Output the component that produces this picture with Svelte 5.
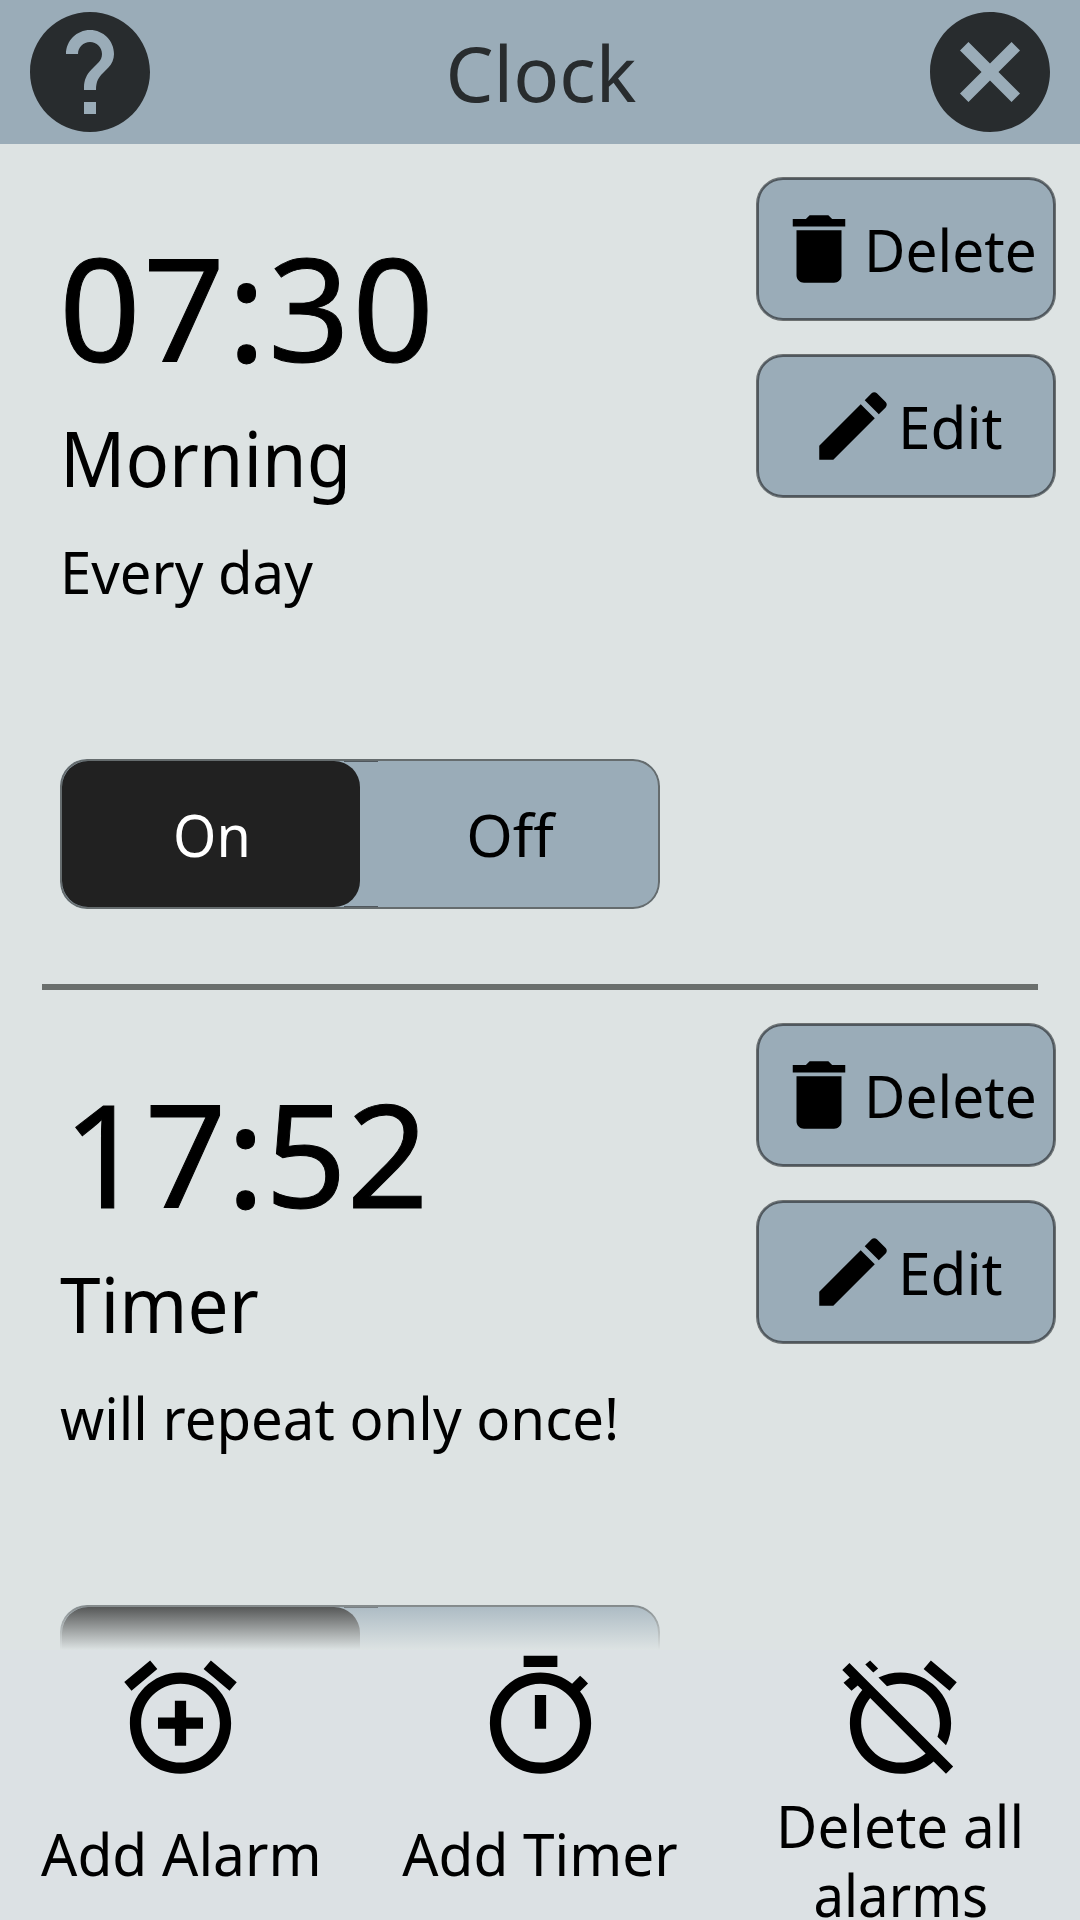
<script>
  // `fit` is the horizontal condensation applied to a piece of text
  const alarms = [
    {
      time: { text: '07:30', kind: 'wide' },
      title: { text: 'Morning', fit: 0.943 },
      repeat: { text: 'Every day', fit: 0.961 }
    },
    {
      time: { text: '17:52', kind: 'narrow' },
      title: { text: 'Timer', fit: 0.953 },
      repeat: { text: 'will repeat only once!', fit: 0.963 }
    }
  ];
</script>

{#snippet label(text, fit)}
  <span class="label" style:--fit={fit}>{text}</span>
{/snippet}

<div class="screen">
  <header>
    <button class="round" aria-label="Help">
      <svg viewBox="0 0 24 24"><path d="M12 2C6.48 2 2 6.48 2 12s4.48 10 10 10 10-4.48 10-10S17.52 2 12 2zm1 17h-2v-2h2v2zm2.07-7.75l-.9.92C13.45 12.9 13 13.5 13 15h-2v-.5c0-1.1.45-2.1 1.17-2.83l1.24-1.26c.37-.36.59-.86.59-1.41 0-1.1-.9-2-2-2s-2 .9-2 2H8c0-2.21 1.79-4 4-4s4 1.79 4 4c0 .88-.36 1.68-.93 2.25z" /></svg>
    </button>
    <h1>{@render label('Clock', 0.995)}</h1>
    <button class="round" aria-label="Close">
      <svg viewBox="0 0 24 24"><path d="M12 2C6.47 2 2 6.47 2 12s4.47 10 10 10 10-4.47 10-10S17.53 2 12 2zm5 13.59L15.59 17 12 13.41 8.41 17 7 15.59 10.59 12 7 8.41 8.41 7 12 10.59 15.59 7 17 8.41 13.41 12 17 15.59z" /></svg>
    </button>
  </header>

  <main>
    {#each alarms as alarm}
      <section class="alarm">
        <div class="info">
          <div class="time {alarm.time.kind}">{alarm.time.text}</div>
          <div class="title">{@render label(alarm.title.text, alarm.title.fit)}</div>
          <div class="repeat">{@render label(alarm.repeat.text, alarm.repeat.fit)}</div>
          <div class="toggle">
            <button class="on">{@render label('On', 0.95)}</button>
            <button class="off">{@render label('Off', 1.02)}</button>
          </div>
        </div>
        <div class="actions">
          <button class="action delete">
            <svg viewBox="0 0 24 24"><path d="M6 19c0 1.1.9 2 2 2h8c1.1 0 2-.9 2-2V7H6v12zM19 4h-3.5l-1-1h-5l-1 1H5v2h14V4z" /></svg>
            {@render label('Delete', 0.971)}
          </button>
          <button class="action edit">
            <svg viewBox="0 0 24 24"><path d="M3 17.25V21h3.75L17.81 9.94l-3.75-3.75L3 17.25zM20.71 7.04c.39-.39.39-1.02 0-1.41l-2.34-2.34c-.39-.39-1.02-.39-1.41 0l-1.83 1.83 3.75 3.75 1.83-1.83z" /></svg>
            {@render label('Edit', 1)}
          </button>
        </div>
      </section>
    {/each}
    <div class="fade"></div>
  </main>

  <footer>
    <button class="tool add">
      <svg viewBox="0 0 24 24"><path d="M7.88 3.39L6.6 1.86 2 5.71l1.29 1.53 4.59-3.85zM22 5.72l-4.6-3.86-1.29 1.53 4.6 3.86L22 5.72zM12 4c-4.97 0-9 4.03-9 9s4.02 9 9 9c4.97 0 9-4.03 9-9s-4.03-9-9-9zm0 16c-3.87 0-7-3.13-7-7s3.13-7 7-7 7 3.13 7 7-3.13 7-7 7zm1-11h-2v3H8v2h3v3h2v-3h3v-2h-3V9z" /></svg>
      <div class="caption">{@render label('Add Alarm', 0.972)}</div>
    </button>
    <button class="tool">
      <svg viewBox="0 0 24 24"><path d="M15 1H9v2h6V1zm-4 13h2V8h-2v6zm8.03-6.61l1.42-1.42c-.43-.51-.9-.99-1.41-1.41l-1.42 1.42C16.07 4.74 14.12 4 12 4c-4.97 0-9 4.03-9 9s4.02 9 9 9 9-4.03 9-9c0-2.12-.74-4.07-1.97-5.61zM12 20c-3.87 0-7-3.13-7-7s3.13-7 7-7 7 3.13 7 7-3.13 7-7 7z" /></svg>
      <div class="caption">{@render label('Add Timer', 0.97)}</div>
    </button>
    <button class="tool">
      <svg viewBox="0 0 24 24"><path d="M12 6c3.87 0 7 3.13 7 7 0 .84-.16 1.65-.43 2.4l1.52 1.52c.58-1.19.91-2.51.91-3.92 0-4.97-4.03-9-9-9-1.41 0-2.73.33-3.92.91L9.6 6.43C10.35 6.16 11.16 6 12 6zm10-.28l-4.6-3.86-1.29 1.53 4.6 3.86L22 5.72zM2.92 2.29L1.65 3.57 2.98 4.9l-1.11.93 1.42 1.42 1.11-.94.8.8C3.83 8.69 3 10.75 3 13c0 4.97 4.02 9 9 9 2.25 0 4.31-.83 5.89-2.2l2.2 2.2 1.27-1.27L3.89 3.27l-.97-.98zm13.55 16.1C15.26 19.39 13.7 20 12 20c-3.87 0-7-3.13-7-7 0-1.7.61-3.26 1.61-4.47l9.86 9.86zM8.02 3.28L6.6 1.86l-.86.71 1.42 1.42.86-.71z" /></svg>
      <div class="caption double">
        {@render label('Delete all', 0.968)}
        {@render label('alarms', 0.931)}
      </div>
    </button>
  </footer>
</div>

<style>
  :global(body) {
    margin: 0;
    background: #dde3e3;
  }
  .screen {
    width: 1080px;
    height: 1920px;
    overflow: hidden;
    display: flex;
    flex-direction: column;
    background: #dde3e3;
    color: #000;
    font: 400 58.5px/69px 'Noto Sans', sans-serif;
  }
  button {
    margin: 0;
    padding: 0;
    border: 0;
    background: none;
    color: inherit;
    font: inherit;
  }
  svg {
    display: block;
    flex: none;
    fill: currentColor;
  }
  .label {
    display: inline-block;
    white-space: nowrap;
    transform: scaleX(var(--fit));
    transform-origin: center;
  }

  header {
    flex: none;
    height: 144px;
    padding: 0 18px;
    box-sizing: border-box;
    display: flex;
    align-items: center;
    justify-content: space-between;
    background: #9aacb8;
    color: #282c2e;
  }
  h1 {
    margin: 0;
    padding-left: 1px;
    font-weight: 400;
    font-size: 76.5px;
    line-height: 144px;
  }
  .round svg {
    width: 144px;
    height: 144px;
  }

  main {
    position: relative;
    flex: 1;
    min-height: 0;
    overflow: hidden;
  }
  .alarm {
    height: 840px;
    margin: 0 42px;
    border-bottom: 6px solid #6a6f6d;
    display: flex;
    justify-content: space-between;
  }
  .info {
    padding: 91px 0 0 18px;
  }
  .info .label,
  .action .label {
    transform-origin: left;
  }
  .time {
    height: 144px;
    font-size: 143px;
    line-height: 144px;
    -webkit-text-stroke: 1px #000;
  }
  .time.wide {
    margin-left: -1px;
    letter-spacing: 2.4px;
  }
  .time.narrow {
    margin-left: 3px;
  }
  .title {
    height: 90px;
    margin-top: 33px;
    font-size: 76.5px;
    line-height: 90px;
  }
  .repeat {
    height: 69px;
    margin-top: 35px;
  }
  .toggle {
    width: 600px;
    height: 150px;
    margin-top: 153px;
    padding: 2px;
    box-sizing: border-box;
    display: flex;
    border-radius: 27px;
    /* short dark seams where the two halves meet, then the fill */
    background:
      linear-gradient(#4f575d, #4f575d) 284px 2px / 34px 1px no-repeat,
      linear-gradient(#4f575d, #4f575d) 284px 147px / 34px 1px no-repeat,
      #9aacb8;
    box-shadow: inset 0 0 0 2px #656c6e;
  }
  .toggle button {
    width: 298px;
    box-sizing: border-box;
  }
  .toggle .label {
    transform-origin: center;
  }
  .toggle .on {
    padding-left: 1px;
    border-radius: 26px;
    background: #212121;
    color: #fff;
  }
  .toggle .off {
    padding-left: 1px;
  }

  .actions {
    display: flex;
    flex-direction: column;
    gap: 35px;
    padding-top: 34px;
    margin-right: -17px;
  }
  .action {
    width: 298px;
    height: 142px;
    display: flex;
    align-items: center;
    border-radius: 26px;
    background: #9aacb8;
    box-shadow:
      0 0 0 1px #6d7171,
      inset 0 0 0 2px #4f575d;
  }
  .action svg {
    width: 90px;
    height: 90px;
  }
  .action .label {
    padding-top: 1px;
  }
  .delete {
    padding-left: 17px;
  }
  .edit {
    padding-left: 51px;
  }

  .fade {
    position: absolute;
    left: 0;
    right: 0;
    bottom: 0;
    height: 60px;
    background: linear-gradient(#dde3e300, #dde3e3);
  }

  footer {
    flex: none;
    height: 270px;
    display: grid;
    grid-template-columns: repeat(3, 1fr);
    background: #dce1e4;
  }
  .tool {
    display: flex;
    flex-direction: column;
    align-items: center;
    height: 270px;
  }
  .tool svg {
    width: 135px;
    height: 135px;
  }
  .caption {
    height: 135px;
    padding-top: 2px;
    box-sizing: border-box;
    display: flex;
    flex-direction: column;
    align-items: center;
    justify-content: center;
  }
  .add .caption {
    padding-left: 2px;
  }
  .caption.double {
    justify-content: flex-start;
    padding-top: 6px;
    padding-left: 1px;
  }
</style>
